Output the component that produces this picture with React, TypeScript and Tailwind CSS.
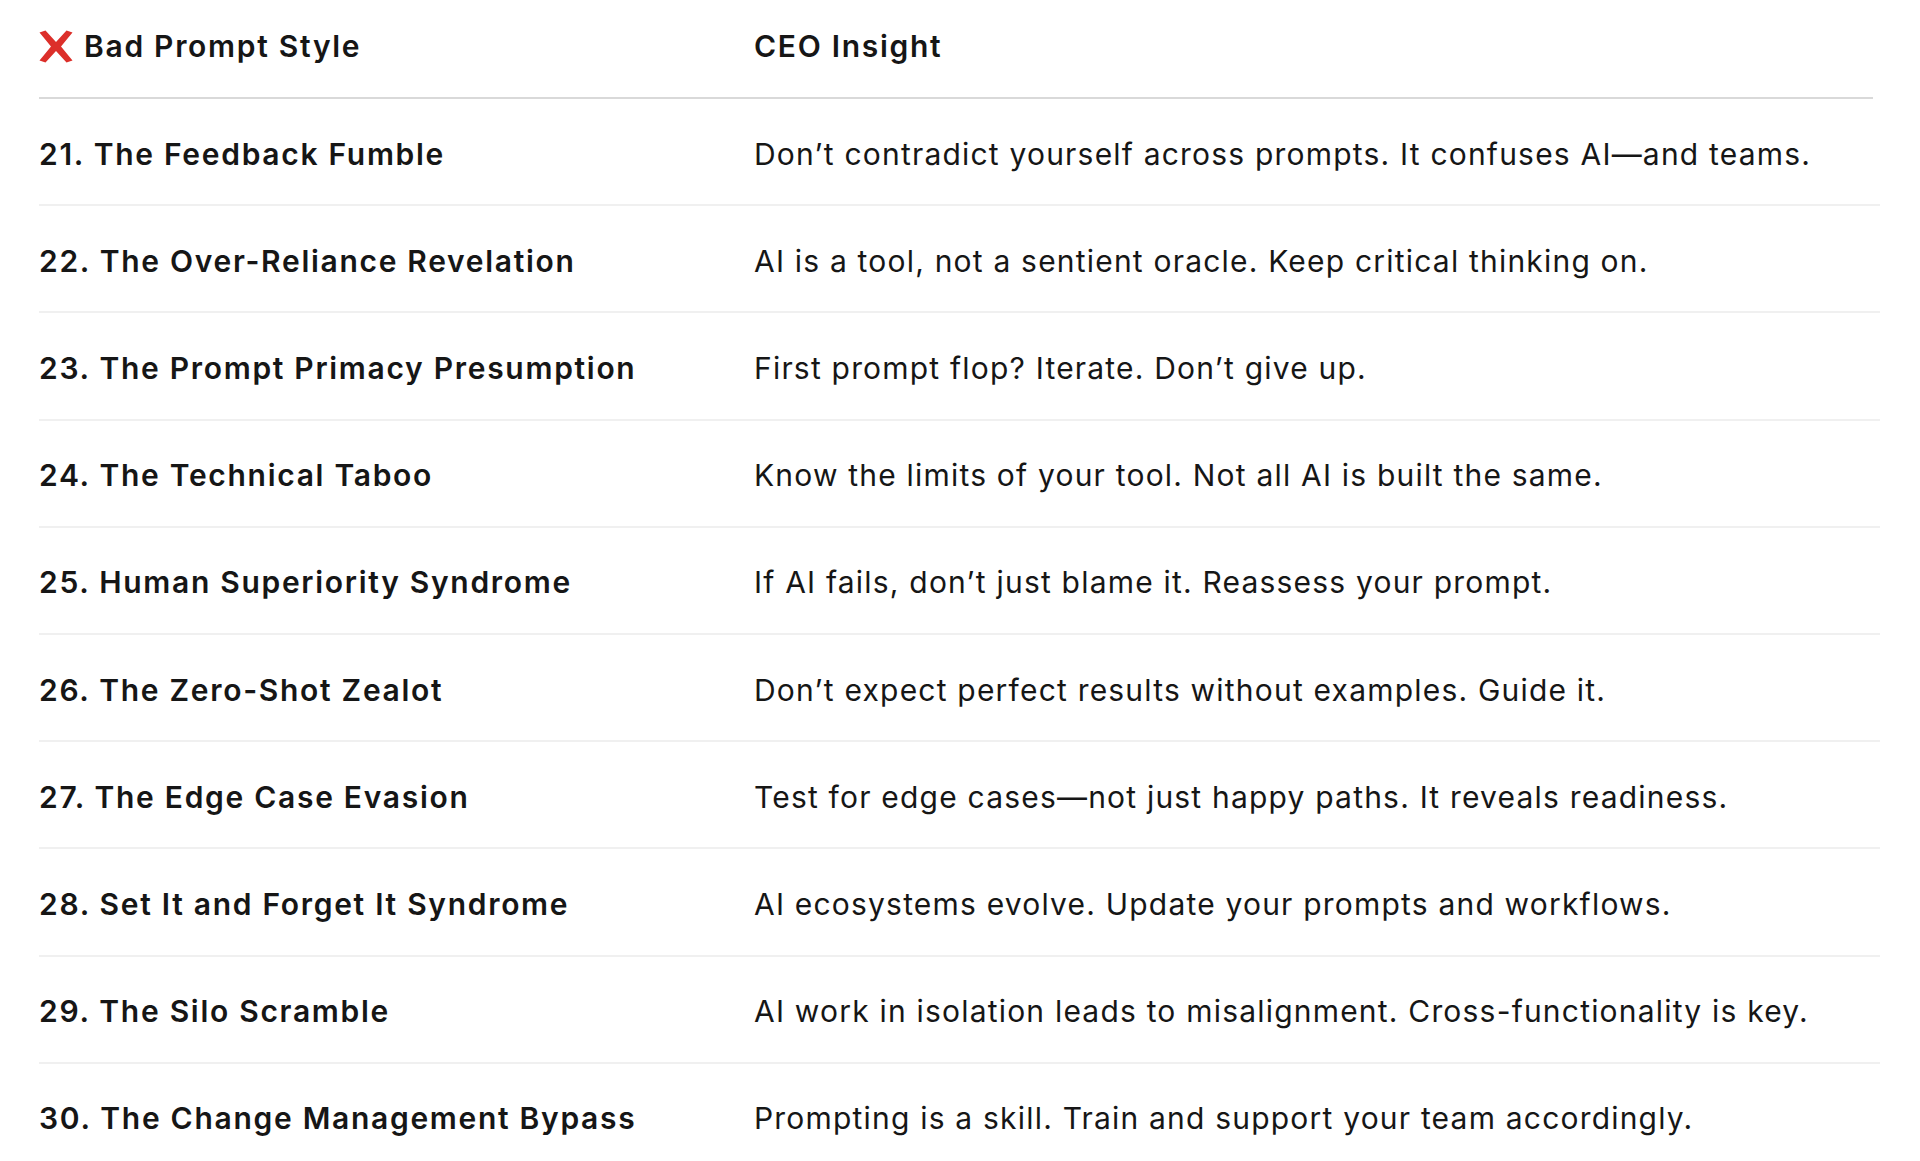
const rows = [
  ["21. The Feedback Fumble", "Don’t contradict yourself across prompts. It confuses AI—and teams."],
  ["22. The Over-Reliance Revelation", "AI is a tool, not a sentient oracle. Keep critical thinking on."],
  ["23. The Prompt Primacy Presumption", "First prompt flop? Iterate. Don’t give up."],
  ["24. The Technical Taboo", "Know the limits of your tool. Not all AI is built the same."],
  ["25. Human Superiority Syndrome", "If AI fails, don’t just blame it. Reassess your prompt."],
  ["26. The Zero-Shot Zealot", "Don’t expect perfect results without examples. Guide it."],
  ["27. The Edge Case Evasion", "Test for edge cases—not just happy paths. It reveals readiness."],
  ["28. Set It and Forget It Syndrome", "AI ecosystems evolve. Update your prompts and workflows."],
  ["29. The Silo Scramble", "AI work in isolation leads to misalignment. Cross-functionality is key."],
  ["30. The Change Management Bypass", "Prompting is a skill. Train and support your team accordingly."],
];

const CrossMark = () => (
  <svg width="34" height="33" viewBox="0 0 34 33" className="shrink-0">
    <path d="M0.5 2.5 L6.5 0.5 L17 12 L27.5 0.5 L33.5 2.5 L22 16.5 L33.5 30.5 L27.5 32.5 L17 21 L6.5 32.5 L0.5 30.5 L12 16.5 Z" fill="#dc2f2a" />
  </svg>
);

export default function App() {
  return (
    <div className="w-[1920px] h-[1161px] overflow-hidden bg-white text-[#161616] font-['Inter','Liberation_Sans',sans-serif]">
      <div className="ml-[39px] w-[1841px]">
        <div className="grid grid-cols-[715px_1fr] h-[99px] items-center pb-[5px] border-b-2 border-[#d9d9d9] mr-[7px]">
          <div className="flex items-center gap-[11px] text-[30px] font-semibold tracking-[1.7px]">
            <CrossMark />
            <span>Bad Prompt Style</span>
          </div>
          <div className="text-[30px] font-semibold tracking-[1.7px]">CEO Insight</div>
        </div>
        {rows.map(([name, insight]) => (
          <div key={name} className="grid grid-cols-[715px_1fr] h-[107.2px] items-center pt-[5px] border-b-2 border-[#f0f0f0]">
            <div className="text-[30px] font-semibold tracking-[1.7px]">{name}</div>
            <div className="text-[30px] tracking-[1.2px]">{insight}</div>
          </div>
        ))}
      </div>
    </div>
  );
}
